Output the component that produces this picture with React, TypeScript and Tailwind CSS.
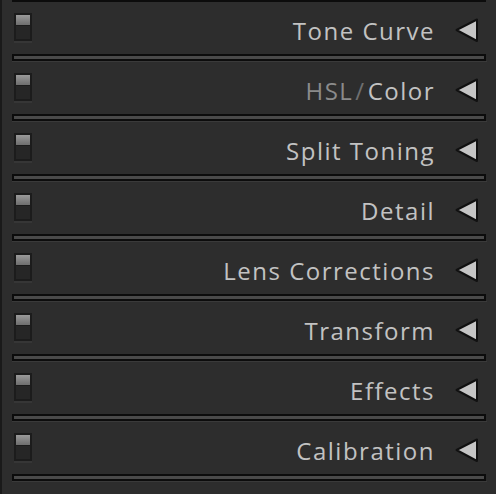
import React from 'react';

const panels = ['Tone Curve', 'HSL/Color', 'Split Toning', 'Detail', 'Lens Corrections', 'Transform', 'Effects', 'Calibration'];

const Toggle: React.FC = () => (
  <div className="flex flex-col">
    <div className="w-[18px] h-[28px] bg-[#1c1c1c] p-[2px] flex flex-col">
      <div className="h-[10px] bg-gradient-to-b from-[#9a9a9a] to-[#6e6e6e]" />
      <div className="flex-1 mt-[1px] bg-[#262626]" />
    </div>
    <div className="h-[2px] bg-[#363636]" />
  </div>
);

const Arrow: React.FC = () => (
  <svg width="24" height="26" viewBox="0 0 24 26" className="shrink-0 mt-[6px]">
    <polygon points="1.5,12 22,1.5 22,23" fill="#c6c6c6" stroke="#111111" strokeWidth="2" strokeLinejoin="round" />
  </svg>
);

const Title: React.FC<{ name: string }> = ({ name }) => {
  if (name === 'HSL/Color') {
    return (
      <span>
        <span className="text-[#8b8b8b]">HSL</span>
        <span className="text-[#6f6f6f] mx-[2px]">/</span>
        <span>Color</span>
      </span>
    );
  }
  return <span>{name}</span>;
};

export default function App() {
  return (
    <div className="flex h-[494px] w-[496px] overflow-hidden bg-[#2d2d2d]" style={{ fontFamily: '"Open Sans", "Noto Sans", sans-serif' }}>
      <div className="w-[2px] bg-[#1a1a1a]" />
      <div className="flex-1">
        <div className="ml-[10px] mr-[10px] h-[2px] bg-[#0c0c0c]" />
        {panels.map((name) => (
          <div key={name}>
            <div className="h-[52px] flex items-center pl-[12px] pr-[17px]">
              <Toggle />
              <div className="flex-1 text-right text-[24px] leading-none tracking-[1.5px] text-[#c2c2c2] pr-[20px] pt-[5px]">
                <Title name={name} />
              </div>
              <Arrow />
            </div>
            <div className="ml-[10px] mr-[10px] h-[7px] border-2 border-[#0c0c0c] bg-[#4a4a4a]" />
            <div className="ml-[10px] mr-[9px] h-px bg-[#3a3a3a]" />
          </div>
        ))}
      </div>
    </div>
  );
}
